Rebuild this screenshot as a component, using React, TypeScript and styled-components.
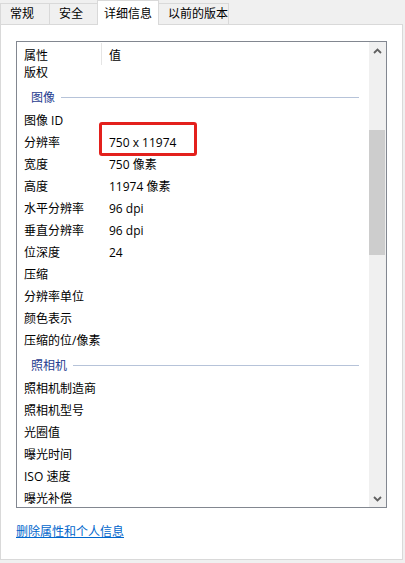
import React, {FC} from 'react';
import styled, {createGlobalStyle} from 'styled-components';

const GlobalStyle = createGlobalStyle`
    html, body {
        margin: 0;
        padding: 0;
        background: #f0f0f0;
    }
    body {
        font-family: 'Open Sans', 'Noto Sans CJK SC', sans-serif;
        font-size: 12px;
        color: #000;
    }
`;

const Window = styled.div`
    width: 405px;
    height: 563px;
    background: #f0f0f0;
    display: flex;
    flex-direction: column;
    overflow: hidden;
`;

const TabStrip = styled.div`
    display: flex;
    align-items: flex-end;
    height: 25px;
    position: relative;
    z-index: 1;
`;

const Tab = styled.div<{$active?: boolean; $width: number}>`
    box-sizing: border-box;
    width: ${({$width}) => $width}px;
    height: ${({$active}) => ($active ? 25 : 22)}px;
    margin-left: -1px;
    padding: 0 0 0 ${({$active}) => ($active ? 6 : 9)}px;
    border: 1px solid #d9d9d9;
    border-bottom: ${({$active}) => ($active ? 'none' : '1px solid #d9d9d9')};
    background: ${({$active}) => ($active ? '#ffffff' : '#f0f0f0')};
    display: flex;
    align-items: center;
    font-size: 12px;
    line-height: 14px;
    padding-top: ${({$active}) => ($active ? 1 : 0)}px;
    white-space: nowrap;

    &:first-child {
        margin-left: 0;
    }
`;

const Panel = styled.section`
    box-sizing: border-box;
    width: 403px;
    height: 536px;
    margin-top: -1px;
    background: #ffffff;
    border: 1px solid #d9d9d9;
    padding: 16px 15px 0 15px;
    display: flex;
    flex-direction: column;
`;

const ListView = styled.div`
    box-sizing: border-box;
    height: 467px;
    border: 1px solid #828790;
    display: grid;
    grid-template-columns: 1fr 17px;
    overflow: hidden;
`;

const ListMain = styled.div`
    display: flex;
    flex-direction: column;
    min-height: 0;
`;

const Header = styled.div`
    display: grid;
    grid-template-columns: 85px 1fr;
    height: 24px;
    flex-shrink: 0;
`;

const HeaderCell = styled.div<{$divider?: boolean}>`
    padding-left: 7px;
    display: flex;
    align-items: center;
    padding-top: 1px;
    border-right: ${({$divider}) => ($divider ? '1px solid #e5e5e5' : 'none')};
    margin: 1px 0 1px 0;
`;

/* the list is scrolled a few pixels down, as in the reference */
const Body = styled.div`
    flex: 1;
    margin-top: -4px;
`;

const Row = styled.div`
    display: grid;
    grid-template-columns: 85px 1fr;
    height: 22px;
    align-items: center;
`;

const Cell = styled.div<{$marked?: boolean}>`
    padding-left: 7px;
    white-space: nowrap;
    position: relative;
    line-height: 14px;

    ${({$marked}) =>
        $marked &&
        `
        &::after {
            content: '';
            position: absolute;
            left: -3px;
            top: -14px;
            width: 98px;
            height: 34px;
            box-sizing: border-box;
            border: 3px solid #e3201c;
            border-radius: 3px;
        }
    `}
`;

const Group = styled.div`
    height: 26px;
    display: flex;
    align-items: center;
    padding: 1px 10px 0 14px;
    box-sizing: border-box;
    color: #1f3c8f;
    gap: 6px;
    line-height: 14px;

    &::after {
        content: '';
        flex: 1;
        height: 1px;
        background: #b6c3d9;
    }
`;

const ScrollBar = styled.div`
    background: #f0f0f0;
    display: grid;
    grid-template-rows: 17px 1fr 17px;
`;

const Arrow = styled.div`
    display: flex;
    align-items: center;
    justify-content: center;
    color: #606060;
`;

const Track = styled.div`
    display: flex;
    flex-direction: column;
    padding-top: 71px;
`;

const Thumb = styled.div`
    height: 125px;
    margin: 0 1px 0 0;
    background: #cdcdcd;
`;

const Link = styled.a`
    margin-top: 16px;
    color: #0066cc;
    text-decoration: underline;
    font-size: 12px;
    line-height: 16px;
    cursor: pointer;
    align-self: flex-start;
`;

const Chevron: FC<{up?: boolean}> = ({up}) => (
    <svg width="9" height="6" viewBox="0 0 9 6">
        <path
            d={up ? 'M1 5 L4.5 1.5 L8 5' : 'M1 1 L4.5 4.5 L8 1'}
            fill="none"
            stroke="currentColor"
            strokeWidth="1.8"
        />
    </svg>
);

type Item = {kind: 'row'; name: string; value?: string; marked?: boolean} | {kind: 'group'; name: string};

const items: Item[] = [
    {kind: 'row', name: '版权'},
    {kind: 'group', name: '图像'},
    {kind: 'row', name: '图像 ID'},
    {kind: 'row', name: '分辨率', value: '750 x 11974', marked: true},
    {kind: 'row', name: '宽度', value: '750 像素'},
    {kind: 'row', name: '高度', value: '11974 像素'},
    {kind: 'row', name: '水平分辨率', value: '96 dpi'},
    {kind: 'row', name: '垂直分辨率', value: '96 dpi'},
    {kind: 'row', name: '位深度', value: '24'},
    {kind: 'row', name: '压缩'},
    {kind: 'row', name: '分辨率单位'},
    {kind: 'row', name: '颜色表示'},
    {kind: 'row', name: '压缩的位/像素'},
    {kind: 'group', name: '照相机'},
    {kind: 'row', name: '照相机制造商'},
    {kind: 'row', name: '照相机型号'},
    {kind: 'row', name: '光圈值'},
    {kind: 'row', name: '曝光时间'},
    {kind: 'row', name: 'ISO 速度'},
    {kind: 'row', name: '曝光补偿'},
];

const tabs = [
    {label: '常规', width: 50},
    {label: '安全', width: 49},
    {label: '详细信息', width: 62, active: true},
    {label: '以前的版本', width: 71},
];

const App: FC = () => (
    <>
        <GlobalStyle />
        <Window>
            <TabStrip>
                {tabs.map(tab => (
                    <Tab key={tab.label} $width={tab.width} $active={tab.active}>
                        {tab.label}
                    </Tab>
                ))}
            </TabStrip>
            <Panel>
                <ListView>
                    <ListMain>
                        <Header>
                            <HeaderCell $divider>属性</HeaderCell>
                            <HeaderCell>值</HeaderCell>
                        </Header>
                        <Body>
                            {items.map((item, i) =>
                                item.kind === 'group' ? (
                                    <Group key={i}>{item.name}</Group>
                                ) : (
                                    <Row key={i}>
                                        <Cell>{item.name}</Cell>
                                        <Cell $marked={item.marked}>{item.value}</Cell>
                                    </Row>
                                )
                            )}
                        </Body>
                    </ListMain>
                    <ScrollBar>
                        <Arrow>
                            <Chevron up />
                        </Arrow>
                        <Track>
                            <Thumb />
                        </Track>
                        <Arrow>
                            <Chevron />
                        </Arrow>
                    </ScrollBar>
                </ListView>
                <Link>删除属性和个人信息</Link>
            </Panel>
        </Window>
    </>
);

export default App;
